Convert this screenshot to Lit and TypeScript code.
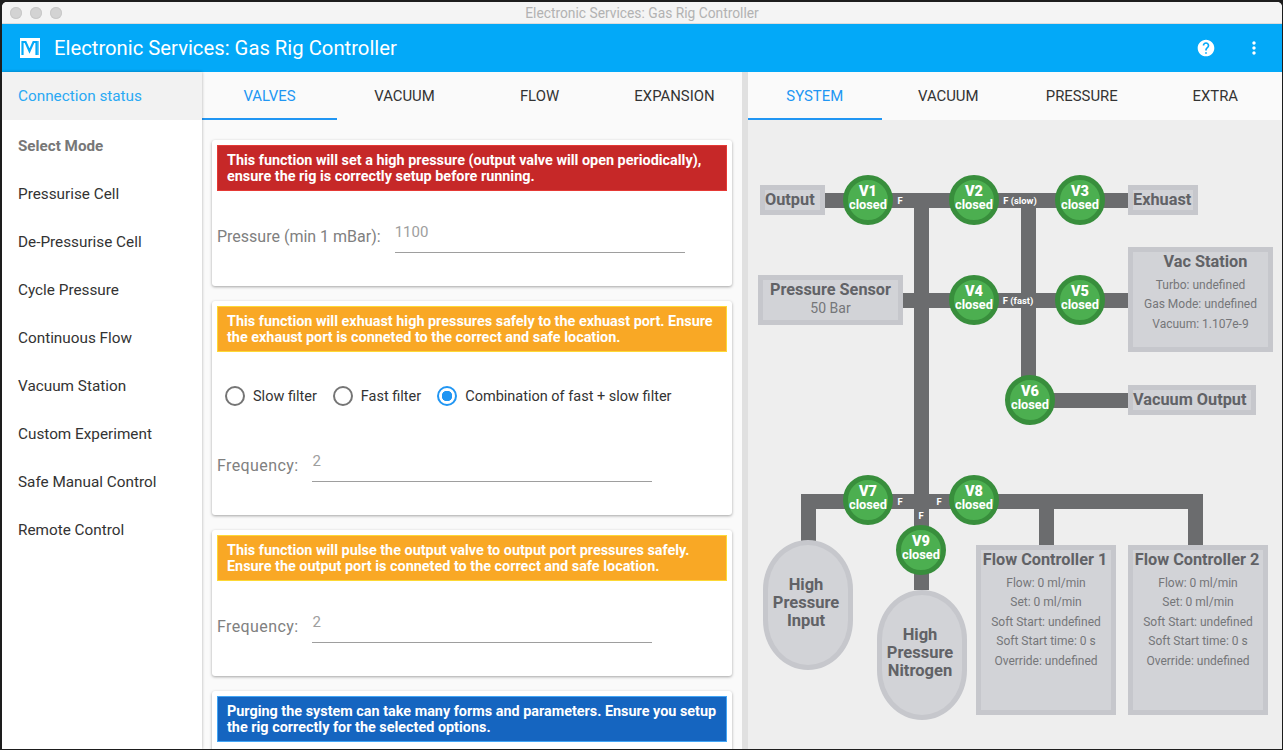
import { html, css, LitElement } from 'lit'
import { customElement } from 'lit/decorators.js'

// diagram coordinates are measured from the top left of the right hand panel
const OX = 748
const OY = 120

const pipes = [
    [824, 193, 1128, 208],
    [914, 193, 929, 590],
    [1021, 193, 1036, 390],
    [900, 293, 1128, 308],
    [1030, 393, 1128, 408],
    [801, 494, 1203, 509],
    [801, 494, 816, 545],
    [1039, 494, 1054, 545],
    [1188, 494, 1203, 545],
]

const valves = [
    ['V1', 868, 200], ['V2', 974, 200], ['V3', 1080, 200],
    ['V4', 974, 300], ['V5', 1080, 300], ['V6', 1030, 400],
    ['V7', 868, 500], ['V8', 974, 500], ['V9', 921, 550],
]

const tags = [
    ['F', 900, 200], ['F (slow)', 1020, 200], ['F (fast)', 1018, 300],
    ['F', 900, 501], ['F', 939, 501], ['F', 921, 515],
]

const flowLines = ['Flow: 0 ml/min', 'Set: 0 ml/min', 'Soft Start: undefined', 'Soft Start time: 0 s', 'Override: undefined']

@customElement('app-root')
export class AppRoot extends LitElement {
    static styles = css`
        :host {
            display: block;
            height: 750px;
            background: #1d1d1d;
            font-family: Roboto, sans-serif;
            overflow: hidden;
        }
        .window {
            height: 747px;
            margin: 2px 1px 0 2px;
            border-radius: 5px 5px 0 0;
            overflow: hidden;
            display: flex;
            flex-direction: column;
            background: #fafafa;
        }
        .titlebar {
            height: 22px;
            flex: none;
            position: relative;
            display: flex;
            align-items: center;
            justify-content: center;
            background: #f4f4f4;
            color: #b2b2b2;
            font-size: 13.8px;
            box-sizing: border-box;
            border-bottom: 1px solid #dcdcdc;
        }
        .lights {
            position: absolute;
            left: 8px;
            top: 5px;
            display: flex;
            gap: 8px;
        }
        .lights i {
            width: 12px;
            height: 12px;
            border-radius: 50%;
            background: #d3d3d3;
            box-shadow: inset 0 0 0 1px #c9c9c9;
        }
        .appbar {
            height: 48px;
            flex: none;
            display: flex;
            align-items: center;
            background: #03a9f8;
            color: #fff;
            padding-left: 18px;
        }
        .appbar svg.logo {
            width: 20px;
            height: 20px;
            margin-right: 14px;
        }
        .appbar .title {
            font-size: 20.25px;
            flex: 1;
        }
        .appbar .icon {
            width: 20px;
            height: 20px;
            fill: #fff;
        }
        .appbar .help { margin-right: 28px; }
        .appbar .more { margin-right: 18px; }
        .main {
            flex: 1;
            display: flex;
            min-height: 0;
        }
        .side {
            width: 200px;
            flex: none;
            background: #fff;
            box-shadow: 0 0 3px rgba(0, 0, 0, 0.3);
            position: relative;
            font-size: 15.3px;
            color: #333;
        }
        .side div {
            height: 48px;
            display: flex;
            align-items: center;
            padding-left: 16px;
        }
        .side .current {
            background: #f2f2f2;
            color: #2aa9f4;
        }
        .side .head {
            color: #777;
            font-weight: 700;
            font-size: 15.2px;
            margin-top: 2px;
        }
        .left {
            width: 540px;
            flex: none;
            display: flex;
            flex-direction: column;
            overflow: hidden;
            background: #fafafa;
        }
        .tabs {
            display: grid;
            grid-template-columns: repeat(4, 1fr);
            height: 48px;
            flex: none;
            background: #fafafa;
        }
        .tab {
            display: flex;
            align-items: center;
            justify-content: center;
            font-size: 14.9px;
            color: #333;
            box-sizing: border-box;
        }
        .tab.on {
            color: #2196f3;
            box-shadow: inset 0 -2px 0 #2196f3;
        }
        .cards {
            padding: 20px 10px 0 10px;
            display: flex;
            flex-direction: column;
            gap: 15px;
        }
        .card {
            background: #fff;
            border-radius: 3px;
            box-shadow: 0 1px 3px rgba(0, 0, 0, 0.35);
            padding: 5px;
            flex: none;
        }
        .alert {
            border: 1px solid;
            box-sizing: border-box;
            height: 46px;
            padding: 7px 6px 6px 9px;
            color: #fff;
            font-weight: 700;
            font-size: 14.4px;
            line-height: 16px;
        }
        .red { background: #c62828; border-color: #e53935; }
        .orange { background: #f9a825; border-color: #fdd835; }
        .blue { background: #1565c0; border-color: #42a5f5; }
        .field {
            display: flex;
            align-items: flex-start;
            height: 90px;
            box-sizing: border-box;
        }
        .spacer {
            height: 60px;
        }
        .label {
            font-size: 16px;
            color: #808080;
            margin-top: 36px;
        }
        .label.freq {
            letter-spacing: 0.4px;
        }
        .input {
            margin-top: 30px;
            margin-left: 14px;
            height: 32px;
            box-sizing: border-box;
            border-bottom: 1px solid #9e9e9e;
            font-size: 15px;
            line-height: 22px;
            color: #9e9e9e;
        }
        .radios {
            display: flex;
            align-items: center;
            height: 20px;
            margin: 34px 0 14px 8px;
            font-size: 14.5px;
            color: #333;
        }
        .radio {
            display: flex;
            align-items: center;
            gap: 8px;
            margin-right: 16px;
        }
        .radio i {
            width: 20px;
            height: 20px;
            box-sizing: border-box;
            border: 2px solid #757575;
            border-radius: 50%;
        }
        .radio.on i {
            border-color: #2196f3;
            background: radial-gradient(circle, #2196f3 0 5px, transparent 5.5px);
        }
        .split {
            width: 6px;
            flex: none;
            background: #e0e0e0;
        }
        .right {
            flex: 1;
            display: flex;
            flex-direction: column;
            min-width: 0;
        }
        .diagram {
            flex: 1;
            background: #eeeeee;
            position: relative;
            overflow: hidden;
            color: #616266;
        }
        .pipe {
            position: absolute;
            background: #6b6c6e;
        }
        .valve {
            position: absolute;
            width: 50px;
            height: 50px;
            box-sizing: border-box;
            border: 5px solid #388e3c;
            border-radius: 50%;
            background: #4caf50;
            color: #fff;
            display: flex;
            flex-direction: column;
            align-items: center;
            justify-content: center;
            font-weight: 700;
            padding-bottom: 5px;
            transform: translate(-25px, -25px);
        }
        .valve b { font-size: 14.5px; line-height: 13px; }
        .valve span { font-size: 12.8px; line-height: 13px; white-space: nowrap; }
        .tag {
            position: absolute;
            transform: translate(-50%, -50%);
            font-size: 9.4px;
            font-weight: 700;
            color: #fff;
            white-space: nowrap;
        }
        .box {
            position: absolute;
            box-sizing: border-box;
            border: 5px solid #c6c7cc;
            background: #d2d3d7;
            text-align: center;
            font-size: 12px;
            color: #757679;
        }
        .box.plain {
            text-align: left;
        }
        .box b {
            display: block;
            font-size: 16.3px;
            line-height: 20px;
            color: #616266;
            white-space: nowrap;
        }
        .box p {
            margin: 0;
            line-height: 19.5px;
        }
        .box p.reading {
            font-size: 14px;
            line-height: 17px;
        }
        .box .vac {
            margin: 0 0 3.5px 10px;
        }
        .box .flow {
            margin-bottom: 3.5px;
            padding-right: 2px;
        }
        .tank {
            position: absolute;
            box-sizing: border-box;
            width: 90px;
            height: 130px;
            border: 5px solid #c6c7cc;
            background: #d2d3d7;
            border-radius: 50% / 38%;
            padding: 0 4px 4px 0;
            display: flex;
            align-items: center;
            justify-content: center;
            text-align: center;
            font-weight: 700;
            font-size: 16.5px;
            line-height: 18px;
            color: #616266;
        }
    `

    box(x0: number, y0: number, x1: number, y1: number) {
        return `left:${x0 - OX}px;top:${y0 - OY}px;width:${x1 - x0}px;height:${y1 - y0}px`
    }

    alertCard(kind: string, text: string, body: unknown) {
        return html`<div class="card"><div class="alert ${kind}">${text}</div>${body}</div>`
    }

    field(label: string, value: string, width: number, labelClass = '') {
        return html`
            <div class="field">
                <span class="label ${labelClass}">${label}</span>
                <span class="input" style="width:${width}px">${value}</span>
            </div>
        `
    }

    diagram() {
        return html`
            <div class="diagram">
                ${pipes.map(p => html`<div class="pipe" style=${this.box(p[0], p[1], p[2], p[3])}></div>`)}
                ${valves.map(v => html`
                    <div class="valve" style="left:${(v[1] as number) - OX}px;top:${(v[2] as number) - OY}px">
                        <b>${v[0]}</b><span>closed</span>
                    </div>
                `)}
                ${tags.map(t => html`<div class="tag" style="left:${(t[1] as number) - OX}px;top:${(t[2] as number) - OY}px">${t[0]}</div>`)}

                <div class="box plain" style=${this.box(760, 185, 825, 215)}><b>Output</b></div>
                <div class="box plain" style=${this.box(1128, 185, 1198, 215)}><b>Exhuast</b></div>
                <div class="box plain" style=${this.box(1128, 385, 1256, 415)}><b>Vacuum Output</b></div>
                <div class="box" style=${this.box(758, 275, 903, 325)}>
                    <b>Pressure Sensor</b>
                    <p class="reading">50 Bar</p>
                </div>
                <div class="box" style=${this.box(1128, 247, 1273, 352)}>
                    <b class="vac">Vac Station</b>
                    <p>Turbo: undefined</p>
                    <p>Gas Mode: undefined</p>
                    <p>Vacuum: 1.107e-9</p>
                </div>
                ${[[976, 1116, 'Flow Controller 1'], [1128, 1268, 'Flow Controller 2']].map(f => html`
                    <div class="box" style=${this.box(f[0] as number, 545, f[1] as number, 715)}>
                        <b class="flow">${f[2]}</b>
                        ${flowLines.map(l => html`<p>${l}</p>`)}
                    </div>
                `)}
                <div class="tank" style=${this.box(763, 540, 853, 670)}>High<br />Pressure<br />Input</div>
                <div class="tank" style=${this.box(877, 590, 967, 720)}>High<br />Pressure<br />Nitrogen</div>
            </div>
        `
    }

    render() {
        return html`
            <div class="window">
                <div class="titlebar">
                    <div class="lights"><i></i><i></i><i></i></div>
                    Electronic Services: Gas Rig Controller
                </div>
                <div class="appbar">
                    <svg class="logo" viewBox="0 0 20 20">
                        <rect width="20" height="20" fill="#fff"></rect>
                        <path d="M2.5 17V4h3l4 9 4-9h3v13" fill="none" stroke="#03a9f8" stroke-width="2.2"></path>
                        <path d="M18 3v14" stroke="#03a9f8" stroke-width="1.2"></path>
                    </svg>
                    <span class="title">Electronic Services: Gas Rig Controller</span>
                    <svg class="icon help" viewBox="0 0 24 24"><path d="M12 2C6.48 2 2 6.48 2 12s4.48 10 10 10 10-4.48 10-10S17.52 2 12 2zm1 17h-2v-2h2v2zm2.07-7.75l-.9.92C13.45 12.9 13 13.5 13 15h-2v-.5c0-1.1.45-2.1 1.17-2.83l1.24-1.26c.37-.36.59-.86.59-1.41 0-1.1-.9-2-2-2s-2 .9-2 2H8c0-2.21 1.79-4 4-4s4 1.79 4 4c0 .88-.36 1.68-.93 2.25z"></path></svg>
                    <svg class="icon more" viewBox="0 0 24 24"><path d="M12 8c1.1 0 2-.9 2-2s-.9-2-2-2-2 .9-2 2 .9 2 2 2zm0 2c-1.1 0-2 .9-2 2s.9 2 2 2 2-.9 2-2-.9-2-2-2zm0 6c-1.1 0-2 .9-2 2s.9 2 2 2 2-.9 2-2-.9-2-2-2z"></path></svg>
                </div>
                <div class="main">
                    <div class="side">
                        <div class="current">Connection status</div>
                        <div class="head">Select Mode</div>
                        <div>Pressurise Cell</div>
                        <div>De-Pressurise Cell</div>
                        <div>Cycle Pressure</div>
                        <div>Continuous Flow</div>
                        <div>Vacuum Station</div>
                        <div>Custom Experiment</div>
                        <div>Safe Manual Control</div>
                        <div>Remote Control</div>
                    </div>
                    <div class="left">
                        <div class="tabs">
                            <div class="tab on">VALVES</div>
                            <div class="tab">VACUUM</div>
                            <div class="tab">FLOW</div>
                            <div class="tab">EXPANSION</div>
                        </div>
                        <div class="cards">
                            ${this.alertCard('red', 'This function will set a high pressure (output valve will open periodically), ensure the rig is correctly setup before running.', this.field('Pressure (min 1 mBar):', '1100', 290))}
                            ${this.alertCard('orange', 'This function will exhuast high pressures safely to the exhuast port. Ensure the exhaust port is conneted to the correct and safe location.', html`
                                <div class="radios">
                                    <div class="radio"><i></i>Slow filter</div>
                                    <div class="radio"><i></i>Fast filter</div>
                                    <div class="radio on"><i></i>Combination of fast + slow filter</div>
                                </div>
                                ${this.field('Frequency:', '2', 340, 'freq')}
                            `)}
                            ${this.alertCard('orange', 'This function will pulse the output valve to output port pressures safely. Ensure the output port is conneted to the correct and safe location.', this.field('Frequency:', '2', 340, 'freq'))}
                            ${this.alertCard('blue', 'Purging the system can take many forms and parameters. Ensure you setup the rig correctly for the selected options.', html`<div class="spacer"></div>`)}
                        </div>
                    </div>
                    <div class="split"></div>
                    <div class="right">
                        <div class="tabs">
                            <div class="tab on">SYSTEM</div>
                            <div class="tab">VACUUM</div>
                            <div class="tab">PRESSURE</div>
                            <div class="tab">EXTRA</div>
                        </div>
                        ${this.diagram()}
                    </div>
                </div>
            </div>
        `
    }
}
